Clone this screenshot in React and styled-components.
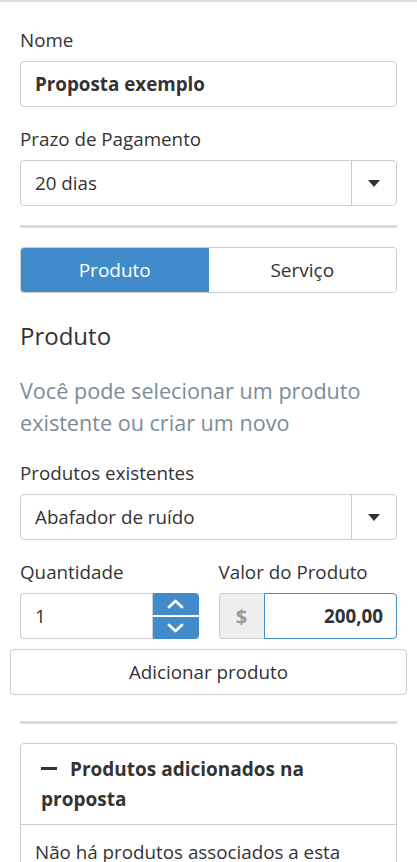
import React from "react";
import styled, { createGlobalStyle } from "styled-components";

const Global = createGlobalStyle`
  html, body { margin: 0; padding: 0; background: #fff; }
  body { font-family: "Open Sans", "Liberation Sans", sans-serif; color: #333; }
  * { box-sizing: border-box; }
`;

const Page = styled.div`
  width: 417px;
  border-top: 2px solid #dcdcdc;
  padding: 0 20px 20px;
`;

const Field = styled.div`
  margin-top: ${(p) => p.$mt || 0}px;
  display: flex;
  flex-direction: column;
`;

const Label = styled.label`
  font-size: 18.8px;
  line-height: 24px;
  margin-bottom: 9px;
  color: #333;
`;

const TextBox = styled.div`
  height: 46px;
  border: 1px solid #ccc;
  border-radius: 4px;
  padding: 0 14px;
  display: flex;
  align-items: center;
  font-size: 18.8px;
  font-weight: ${(p) => (p.$bold ? 700 : 400)};
  justify-content: ${(p) => (p.$right ? "flex-end" : "flex-start")};
  background: #fff;
`;

const Select = styled.div`
  height: 46px;
  border: 1px solid #ccc;
  border-radius: 4px;
  display: flex;
  font-size: 18.8px;
`;

const SelectValue = styled.div`
  flex: 1;
  display: flex;
  align-items: center;
  padding: 0 14px;
`;

const SelectCaret = styled.div`
  width: 45px;
  border-left: 1px solid #ccc;
  display: flex;
  align-items: center;
  justify-content: center;
`;

const Caret = () => (
  <svg width="12" height="7" viewBox="0 0 12 7">
    <path d="M0 0 L12 0 L6 7 Z" fill="#333" />
  </svg>
);

const Rule = styled.div`
  height: 3px;
  background: #dcdcdc;
  margin-top: ${(p) => p.$mt}px;
`;

const Tabs = styled.div`
  margin-top: 19px;
  height: 46px;
  display: flex;
  border: 1px solid #ccc;
  border-radius: 4px;
  overflow: hidden;
`;

const Tab = styled.div`
  flex: 1;
  display: flex;
  align-items: center;
  justify-content: center;
  font-size: 19px;
  background: ${(p) => (p.$active ? "#428bca" : "#fff")};
  color: ${(p) => (p.$active ? "#fff" : "#333")};
`;

const Heading = styled.h3`
  margin: 27px 0 0;
  font-size: 24px;
  line-height: 32px;
  font-weight: 400;
`;

const Help = styled.p`
  margin: 23px 0 0;
  font-size: 21.6px;
  line-height: 32px;
  color: #7b8c99;
`;

const Row = styled.div`
  display: flex;
  gap: 20px;
  margin-top: 20px;
`;

const Col = styled.div`
  flex: 1;
  display: flex;
  flex-direction: column;
  min-width: 0;
`;

const InputGroup = styled.div`
  display: flex;
  height: 46px;
`;

const NumInput = styled(TextBox)`
  flex: 1;
  min-width: 0;
  border-radius: 4px 0 0 4px;
`;

const Spinner = styled.div`
  width: 46px;
  display: flex;
  flex-direction: column;
  gap: 2px;
  border-radius: 0 4px 4px 0;
  overflow: hidden;
  background: #fff;
`;

const SpinBtn = styled.div`
  flex: 1;
  background: #428bca;
  display: flex;
  align-items: center;
  justify-content: center;
`;

const Addon = styled.div`
  width: 45px;
  background: #eee;
  border: 1px solid #ccc;
  border-right: none;
  border-radius: 4px 0 0 4px;
  display: flex;
  align-items: center;
  justify-content: center;
  font-size: 20px;
  font-weight: 700;
  color: #999;
`;

const MoneyInput = styled(TextBox)`
  flex: 1;
  min-width: 0;
  border-color: #428bca;
  border-radius: 0 4px 4px 0;
  padding-right: 13px;
`;

const Button = styled.div`
  margin: 10px -10px 0;
  height: 46px;
  border: 1px solid #ccc;
  border-radius: 4px;
  display: flex;
  align-items: center;
  justify-content: center;
  font-size: 18.8px;
`;

const Panel = styled.div`
  margin-top: 19px;
  border: 1px solid #ccc;
  border-radius: 4px;
`;

const PanelHead = styled.div`
  padding: 10px 20px 10px;
  font-size: 19px;
  font-weight: 700;
  line-height: 30px;
  border-bottom: 1px solid #ccc;
`;

const Minus = styled.span`
  display: inline-block;
  width: 16px;
  height: 3px;
  background: #333;
  vertical-align: middle;
  margin: 0 13px 4px 0;
`;

const PanelBody = styled.div`
  padding: 12px 14px;
  font-size: 18.8px;
  line-height: 30px;
`;

const Chevron = ({ up }) => (
  <svg width="17" height="10" viewBox="0 0 17 10">
    <path
      d={up ? "M2 8 L8.5 2 L15 8" : "M2 2 L8.5 8 L15 2"}
      fill="none"
      stroke="#fff"
      strokeWidth="2.8"
      strokeLinecap="round"
      strokeLinejoin="round"
    />
  </svg>
);

export default function App() {
  return (
    <>
      <Global />
      <Page>
        <Field $mt={26}>
          <Label>Nome</Label>
          <TextBox $bold>Proposta exemplo</TextBox>
        </Field>
        <Field $mt={20}>
          <Label>Prazo de Pagamento</Label>
          <Select>
            <SelectValue>20 dias</SelectValue>
            <SelectCaret>
              <Caret />
            </SelectCaret>
          </Select>
        </Field>
        <Rule $mt={19} />
        <Tabs>
          <Tab $active>Produto</Tab>
          <Tab>Serviço</Tab>
        </Tabs>
        <Heading>Produto</Heading>
        <Help>Você pode selecionar um produto existente ou criar um novo</Help>
        <Field $mt={22}>
          <Label>Produtos existentes</Label>
          <Select>
            <SelectValue>Abafador de ruído</SelectValue>
            <SelectCaret>
              <Caret />
            </SelectCaret>
          </Select>
        </Field>
        <Row>
          <Col>
            <Label>Quantidade</Label>
            <InputGroup>
              <NumInput>1</NumInput>
              <Spinner>
                <SpinBtn>
                  <Chevron up />
                </SpinBtn>
                <SpinBtn>
                  <Chevron />
                </SpinBtn>
              </Spinner>
            </InputGroup>
          </Col>
          <Col>
            <Label>Valor do Produto</Label>
            <InputGroup>
              <Addon>$</Addon>
              <MoneyInput $bold $right>200,00</MoneyInput>
            </InputGroup>
          </Col>
        </Row>
        <Button>Adicionar produto</Button>
        <Rule $mt={26} />
        <Panel>
          <PanelHead>
            <Minus />
            Produtos adicionados na proposta
          </PanelHead>
          <PanelBody>Não há produtos associados a esta proposta.</PanelBody>
        </Panel>
      </Page>
    </>
  );
}
